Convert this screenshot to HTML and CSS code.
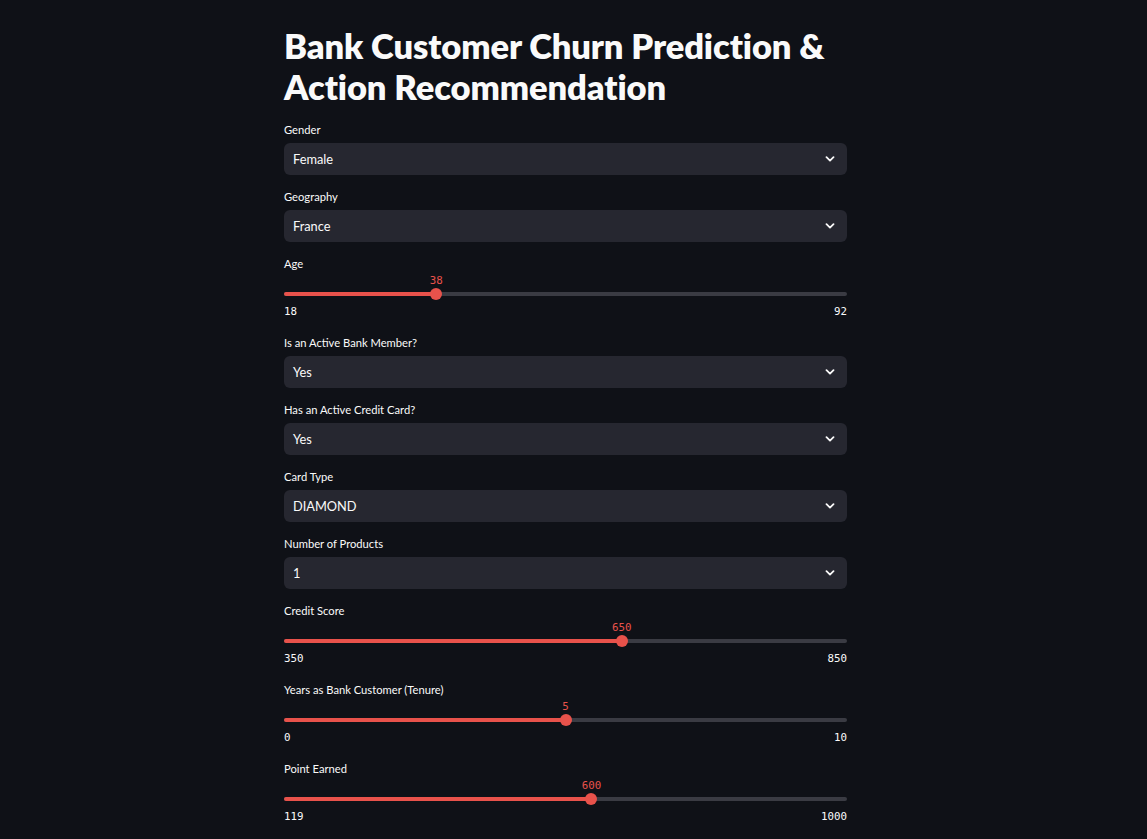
FILE: index.html
```html
<!DOCTYPE html>
<html lang="en">
<head>
<meta charset="utf-8">
<title>Bank Customer Churn Prediction</title>
<link rel="stylesheet" href="styles.css">
</head>
<body>
<main class="page">
  <h1 class="title">Bank Customer Churn Prediction &amp; Action Recommendation</h1>

  <div class="widget">
    <div class="label">Gender</div>
    <div class="select"><span>Female</span><svg class="chev" viewBox="0 0 10 6"><path d="M1.5 1.2 L5 4.6 L8.5 1.2"/></svg></div>
  </div>

  <div class="widget">
    <div class="label">Geography</div>
    <div class="select"><span>France</span><svg class="chev" viewBox="0 0 10 6"><path d="M1.5 1.2 L5 4.6 L8.5 1.2"/></svg></div>
  </div>

  <div class="widget">
    <div class="label">Age</div>
    <div class="slider">
      <div class="track-row">
        <div class="track"><div class="fill" style="width:27.03%"></div>
          <div class="thumb" style="left:27.03%"><span class="value">38</span></div>
        </div>
      </div>
      <div class="minmax"><span>18</span><span>92</span></div>
    </div>
  </div>

  <div class="widget">
    <div class="label">Is an Active Bank Member?</div>
    <div class="select"><span>Yes</span><svg class="chev" viewBox="0 0 10 6"><path d="M1.5 1.2 L5 4.6 L8.5 1.2"/></svg></div>
  </div>

  <div class="widget">
    <div class="label">Has an Active Credit Card?</div>
    <div class="select"><span>Yes</span><svg class="chev" viewBox="0 0 10 6"><path d="M1.5 1.2 L5 4.6 L8.5 1.2"/></svg></div>
  </div>

  <div class="widget">
    <div class="label">Card Type</div>
    <div class="select"><span>DIAMOND</span><svg class="chev" viewBox="0 0 10 6"><path d="M1.5 1.2 L5 4.6 L8.5 1.2"/></svg></div>
  </div>

  <div class="widget">
    <div class="label">Number of Products</div>
    <div class="select"><span>1</span><svg class="chev" viewBox="0 0 10 6"><path d="M1.5 1.2 L5 4.6 L8.5 1.2"/></svg></div>
  </div>

  <div class="widget">
    <div class="label">Credit Score</div>
    <div class="slider">
      <div class="track-row">
        <div class="track"><div class="fill" style="width:60%"></div>
          <div class="thumb" style="left:60%"><span class="value">650</span></div>
        </div>
      </div>
      <div class="minmax"><span>350</span><span>850</span></div>
    </div>
  </div>

  <div class="widget">
    <div class="label">Years as Bank Customer (Tenure)</div>
    <div class="slider">
      <div class="track-row">
        <div class="track"><div class="fill" style="width:50%"></div>
          <div class="thumb" style="left:50%"><span class="value">5</span></div>
        </div>
      </div>
      <div class="minmax"><span>0</span><span>10</span></div>
    </div>
  </div>

  <div class="widget">
    <div class="label">Point Earned</div>
    <div class="slider">
      <div class="track-row">
        <div class="track"><div class="fill" style="width:54.6%"></div>
          <div class="thumb" style="left:54.6%"><span class="value">600</span></div>
        </div>
      </div>
      <div class="minmax"><span>119</span><span>1000</span></div>
    </div>
  </div>
</main>
</body>
</html>
```

FILE: styles.css
```css
html, body {
  margin: 0;
  padding: 0;
  background: #0f1117;
  color: #fafafa;
  font-family: "Lato", "Noto Sans", sans-serif;
}
body {
  display: flex;
  justify-content: center;
  padding-right: 16px;
  min-height: 839px;
  overflow: hidden;
}
.page {
  width: 563px;
  padding-top: 25px;
  display: flex;
  flex-direction: column;
  gap: 13px;
}
.title {
  margin: 0 0 1px 0;
  font-size: 34.5px;
  line-height: 41px;
  font-weight: 800;
  letter-spacing: -0.1px;
  color: #fafafa;
}
.widget {
  display: flex;
  flex-direction: column;
}
.label {
  height: 18px;
  line-height: 18px;
  font-size: 11.2px;
  margin-bottom: 4px;
  color: #fafafa;
}
.select {
  height: 32px;
  background: #262730;
  border-radius: 6px;
  display: flex;
  align-items: center;
  justify-content: space-between;
  padding: 0 10px 0 9px;
  font-size: 12.8px;
}
.chev {
  width: 10px;
  height: 6px;
  fill: none;
  stroke: #fafafa;
  stroke-width: 1.8;
  stroke-linecap: round;
  stroke-linejoin: round;
  margin-right: 2px;
}
.slider {
  display: flex;
  flex-direction: column;
  margin-top: -4px;
}
.track-row {
  height: 28px;
  display: flex;
  align-items: flex-end;
  padding-bottom: 5px;
  box-sizing: border-box;
}
.track {
  position: relative;
  width: 100%;
  height: 4px;
  border-radius: 2px;
  background: #3a3b43;
}
.fill {
  height: 100%;
  background: #e8524b;
  border-radius: 2px;
}
.thumb {
  position: absolute;
  top: 50%;
  width: 12px;
  height: 12px;
  margin: -6px 0 0 -6px;
  border-radius: 50%;
  background: #e8524b;
}
.value {
  position: absolute;
  left: 50%;
  bottom: 13px;
  transform: translateX(-50%);
  font-family: "DejaVu Sans Mono", "Liberation Mono", monospace;
  font-size: 10.8px;
  line-height: 12px;
  color: #e8524b;
}
.minmax {
  height: 20px;
  display: flex;
  justify-content: space-between;
  align-items: center;
  font-family: "DejaVu Sans Mono", "Liberation Mono", monospace;
  font-size: 10.8px;
  color: #fafafa;
}
```
